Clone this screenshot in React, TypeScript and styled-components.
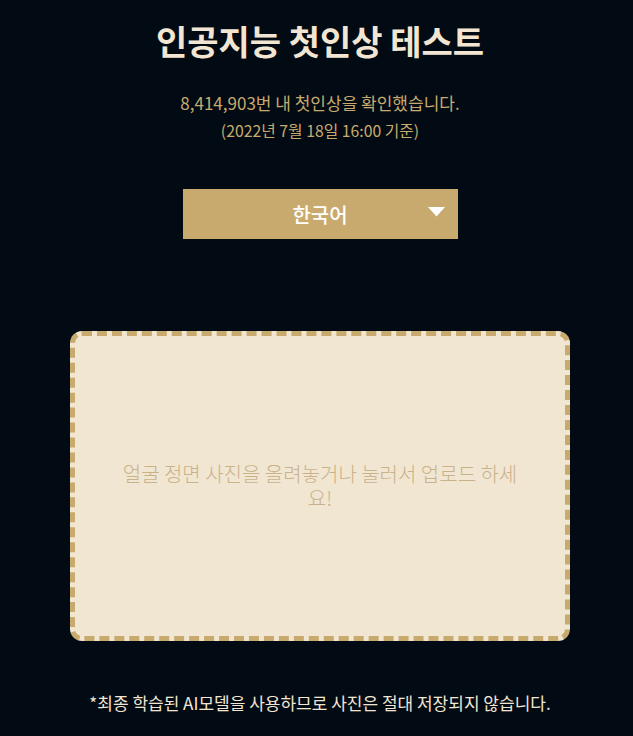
import React from 'react';
import styled, { createGlobalStyle } from 'styled-components';

const GlobalStyle = createGlobalStyle`
  html, body {
    margin: 0;
    padding: 0;
    background: #020a13;
  }
  body {
    font-family: 'Noto Sans CJK KR', 'Noto Sans', sans-serif;
    color: #f2e6d3;
  }
`;

const Page = styled.main`
  min-height: 736px;
  display: flex;
  flex-direction: column;
  align-items: center;
  padding: 18px 0 0 7px;
  box-sizing: border-box;
`;

const Title = styled.h1`
  margin: 0;
  font-size: 34px;
  font-weight: 700;
  color: #f2e6d3;
  line-height: 46px;
`;

const Count = styled.p`
  margin: 26px 0 0;
  font-size: 17px;
  color: #c8aa6e;
  line-height: 26px;
`;

const DateNote = styled.p`
  margin: 3px 0 0;
  font-size: 15.8px;
  color: #c8aa6e;
  line-height: 24px;
`;

const LangSelect = styled.div`
  margin-top: 46px;
  width: 275px;
  height: 50px;
  background: #c8aa6e;
  display: flex;
  align-items: center;
  justify-content: center;
  position: relative;
  color: #ffffff;
  font-size: 20px;
  font-weight: 500;
`;

const Caret = styled.svg`
  position: absolute;
  right: 13px;
  top: 18px;
`;

const DropZone = styled.div`
  margin-top: 92px;
  width: 500px;
  height: 310px;
  box-sizing: border-box;
  background: #f1e6d2;
  border: 5px dashed #c8aa6e;
  border-radius: 12px;
  display: flex;
  align-items: center;
  justify-content: center;
  padding: 0 40px;
  text-align: center;
  font-size: 20px;
  font-weight: 300;
  line-height: 24px;
  color: #c9b28a;
`;

const Notice = styled.p`
  margin: 50px 0 0;
  font-size: 17px;
  color: #f2e6d3;
  line-height: 24px;
`;

export default function App() {
  return (
    <>
      <GlobalStyle />
      <Page>
        <Title>인공지능 첫인상 테스트</Title>
        <Count>8,414,903번 내 첫인상을 확인했습니다.</Count>
        <DateNote>(2022년 7월 18일 16:00 기준)</DateNote>
        <LangSelect>
          한국어
          <Caret width="17" height="10" viewBox="0 0 17 10">
            <path d="M0 0 H17 L8.5 9.5 Z" fill="#ffffff" />
          </Caret>
        </LangSelect>
        <DropZone>얼굴 정면 사진을 올려놓거나 눌러서 업로드 하세요!</DropZone>
        <Notice>*최종 학습된 AI모델을 사용하므로 사진은 절대 저장되지 않습니다.</Notice>
      </Page>
    </>
  );
}
